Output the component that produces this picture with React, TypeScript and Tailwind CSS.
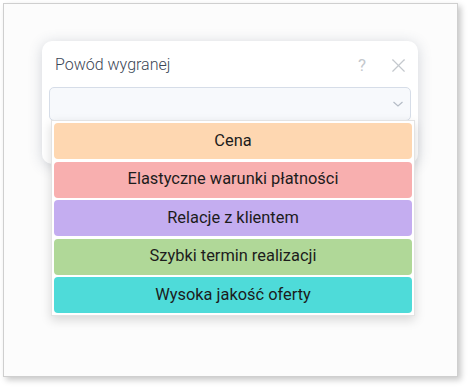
import { X } from "lucide-react";

const reasons = [
  { label: "Cena", color: "bg-[#fed7b1]" },
  { label: "Elastyczne warunki płatności", color: "bg-[#f8afaf]" },
  { label: "Relacje z klientem", color: "bg-[#c4adf0]" },
  { label: "Szybki termin realizacji", color: "bg-[#b0d898]" },
  { label: "Wysoka jakość oferty", color: "bg-[#4edbd9]" },
];

export default function App() {
  return (
    <div className="h-[389px] w-[470px] bg-white p-[3px] font-['Roboto',sans-serif]">
      <div className="h-[374px] w-[455px] border border-[#cfcfcf] bg-[#fcfcfc] pl-[38px] pt-[37px] shadow-[3px_3px_6px_rgba(0,0,0,0.22)]">
        <div className="relative w-[376px] rounded-[10px] bg-white px-[7px] pb-[43px] pt-[12px] shadow-[0_2px_14px_rgba(60,75,100,0.22)]">
          <div className="flex h-[24px] items-center justify-between pl-[6px] pr-[1px]">
            <span className="text-[16px] font-light text-[#3b4655]">Powód wygranej</span>
            <div className="flex items-center gap-[21px] text-[#c4c8cd]">
              <span className="text-[17px] leading-none">?</span>
              <X size={23} strokeWidth={1.2} />
            </div>
          </div>
          <div className="mt-[10px] flex h-[34px] items-center justify-end rounded-[5px] border border-[#d6dde8] bg-[#f7f9fc] pr-[6px]">
            <svg width="12" height="8" viewBox="0 0 12 8" fill="none" stroke="#b5bcc6" strokeWidth="1.2">
              <path d="M1.5 2l4.5 4 4.5-4" />
            </svg>
          </div>
          <div className="absolute left-[9px] top-[79px] flex w-[364px] flex-col gap-[2.6px] border border-[#e3e3e3] bg-white p-[2px] shadow-[0_4px_10px_rgba(0,0,0,0.15)]">
            {reasons.map((r) => (
              <div
                key={r.label}
                className={`flex h-[36px] items-center justify-center rounded-[4px] text-[16.4px] text-[#1c1c1c] ${r.color}`}
              >
                {r.label}
              </div>
            ))}
          </div>
        </div>
      </div>
    </div>
  );
}
